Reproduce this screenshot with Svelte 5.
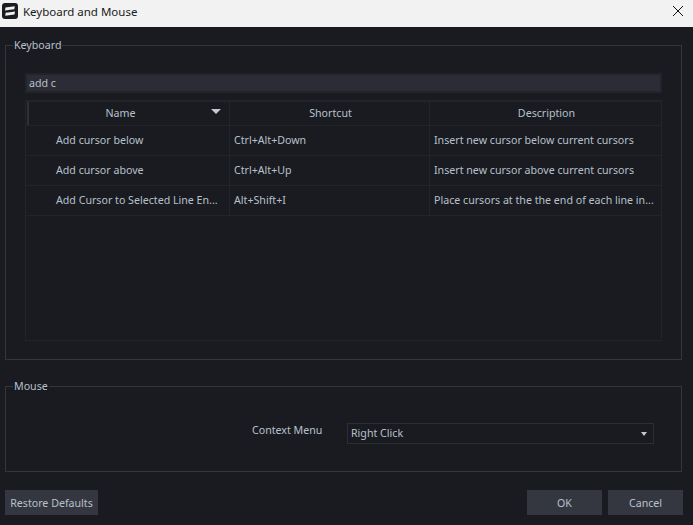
<script lang="ts">
	const shortcuts = [
		{ name: 'Add cursor below', keys: 'Ctrl+Alt+Down', description: 'Insert new cursor below current cursors' },
		{ name: 'Add cursor above', keys: 'Ctrl+Alt+Up', description: 'Insert new cursor above current cursors' },
		{
			name: 'Add Cursor to Selected Line En...',
			keys: 'Alt+Shift+I',
			description: 'Place cursors at the the end of each line in...'
		}
	];
</script>

<div class="window">
	<header class="titlebar">
		<svg class="logo" width="16" height="16" viewBox="0 0 16 16">
			<rect width="16" height="16" rx="3" fill="#1c1d20" />
			<path d="M3.5 4.5 L12.8 3.2 L12.3 6.2 L8 6.7 L3 7.6 Z M13 8.4 L12.5 11.5 L3.2 12.8 L3.7 9.8 L8 9.3 Z" fill="#f2f2f2" />
		</svg>
		<span class="title">Keyboard and Mouse</span>
		<svg class="close" width="12" height="12" viewBox="0 0 12 12">
			<path d="M1 1 L11 11 M11 1 L1 11" stroke="#111" stroke-width="1" fill="none" />
		</svg>
	</header>

	<main class="content">
		<fieldset class="group keyboard">
			<legend>Keyboard</legend>
			<div class="keyboard-body">
				<div class="search">add c</div>
				<div class="table">
					<div class="row head">
						<div class="handle"></div>
						<div class="cell name-head">
							Name
							<span class="sort"></span>
						</div>
						<div class="cell">Shortcut</div>
						<div class="cell">Description</div>
					</div>
					{#each shortcuts as item}
						<div class="row">
							<div class="handle"></div>
							<div class="cell name">{item.name}</div>
							<div class="cell">{item.keys}</div>
							<div class="cell">{item.description}</div>
						</div>
					{/each}
				</div>
			</div>
		</fieldset>

		<fieldset class="group mouse">
			<legend>Mouse</legend>
			<div class="mouse-body">
				<span class="field-label">Context Menu</span>
				<div class="combo">
					Right Click
					<span class="arrow"></span>
				</div>
			</div>
		</fieldset>

		<footer class="actions">
			<button class="restore">Restore Defaults</button>
			<div class="spacer"></div>
			<button class="wide">OK</button>
			<button class="wide">Cancel</button>
		</footer>
	</main>
</div>

<style>
	:global(body) {
		margin: 0;
		background: #191b20;
	}

	.window {
		width: 693px;
		height: 525px;
		display: flex;
		flex-direction: column;
		overflow: hidden;
		font-family: 'Noto Sans', sans-serif;
		font-size: 10.65px;
		color: #b8c0cc;
	}

	.titlebar {
		height: 27px;
		flex: none;
		display: flex;
		align-items: flex-start;
		padding: 0 9px 0 2px;
		box-sizing: border-box;
		background: #f2f2f2;
		color: #1a1a1a;
		font-size: 11.5px;
		line-height: 16px;
	}

	.logo {
		margin: 3px 5px 0 0;
	}

	.title {
		margin-top: 4px;
	}

	.close {
		margin: 5px 0 0 auto;
	}

	.content {
		flex: 1;
		display: flex;
		flex-direction: column;
		padding: 11px 10px 9px 5px;
	}

	.group {
		margin: 0;
		padding: 0;
		border: 1px solid #34363b;
		min-width: 0;
		width: 677px;
		box-sizing: border-box;
	}

	legend {
		margin-left: 7px;
		padding: 0 1px;
		line-height: 15px;
	}

	.keyboard {
		height: 322px;
	}

	.keyboard-body {
		padding: 20px 19px 0 19px;
	}

	.search {
		height: 20px;
		box-sizing: border-box;
		border: 2px solid #222429;
		background: #2b2c35;
		padding-left: 2px;
		line-height: 16px;
	}

	.table {
		height: 241px;
		box-sizing: border-box;
		margin-top: 7px;
		border: 1px solid #222429;
		border-top-width: 2px;
	}

	.row {
		display: grid;
		grid-template-columns: 4px 200px 200px 1fr;
		height: 30px;
		box-sizing: border-box;
		border-bottom: 1px solid #222429;
		line-height: 29px;
	}

	.row.head {
		height: 24px;
		line-height: 23px;
		text-align: center;
	}

	.head .handle {
		background: #2f3036;
		width: 2px;
		margin-left: 1px;
	}

	.cell {
		position: relative;
		padding-left: 4px;
		border-right: 1px solid #222429;
		white-space: nowrap;
		overflow: hidden;
	}

	.cell:last-child {
		border-right: 0;
	}

	.head .cell {
		padding-left: 2px;
	}

	.cell.name {
		padding-left: 26px;
	}

	.cell.name-head {
		padding-right: 20px;
	}

	.sort {
		position: absolute;
		right: 8px;
		top: 7px;
		border-left: 5px solid transparent;
		border-right: 5px solid transparent;
		border-top: 5px solid #c5c8cf;
	}

	.mouse {
		height: 93px;
		margin-top: 19px;
	}

	.mouse-body {
		display: flex;
		align-items: center;
		padding: 29px 0 0 246px;
	}

	.field-label {
		width: 95px;
		margin-top: -8px;
	}

	.combo {
		position: relative;
		width: 307px;
		height: 21px;
		box-sizing: border-box;
		border: 1px solid #2c2e33;
		padding-left: 3px;
		line-height: 19px;
	}

	.arrow {
		position: absolute;
		right: 6px;
		top: 8px;
		border-left: 3.5px solid transparent;
		border-right: 3.5px solid transparent;
		border-top: 4px solid #c5c8cf;
	}

	.actions {
		display: flex;
		gap: 6px;
		margin-top: 18px;
	}

	.spacer {
		flex: 1;
	}

	button {
		height: 25px;
		padding: 0;
		border: 0;
		background: #353740;
		color: #b8c0cc;
		font: inherit;
	}

	.restore {
		width: 93px;
	}

	.wide {
		width: 75px;
	}
</style>
